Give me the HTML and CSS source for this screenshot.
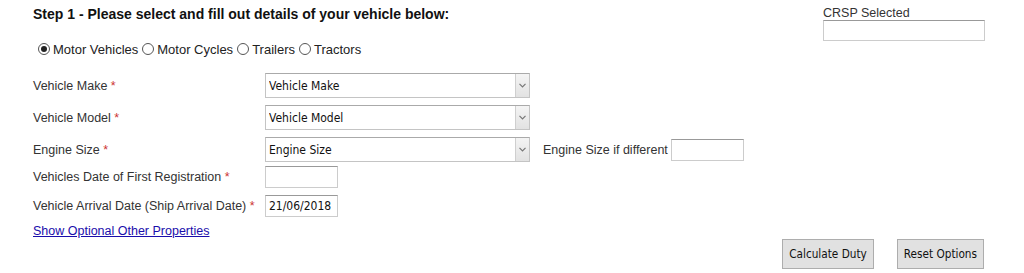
FILE: index.html
```html
<!DOCTYPE html>
<html lang="en">
<head>
  <meta charset="UTF-8">
  <title>Step 1 - Vehicle Details</title>
  <link rel="stylesheet" href="styles.css">
</head>
<body>
  <div class="page">
    <div class="top">
      <div class="intro">
        <h2>Step 1 - Please select and fill out details of your vehicle below:</h2>
        <div class="types">
          <label><input type="radio" name="type" checked>Motor Vehicles</label>
          <label><input type="radio" name="type">Motor Cycles</label>
          <label><input type="radio" name="type">Trailers</label>
          <label><input type="radio" name="type">Tractors</label>
        </div>
      </div>
      <div class="crsp">
        <span>CRSP Selected</span>
        <input type="text" class="crsp-box">
      </div>
    </div>

    <div class="row row-select">
      <label class="lbl">Vehicle Make <span class="req">*</span></label>
      <div class="sel">
        <select><option>Vehicle Make</option></select>
        <span class="arrow"><svg width="7" height="5" viewBox="0 0 7 5"><path d="M0.5 0.8 L3.5 3.8 L6.5 0.8" fill="none" stroke="#777" stroke-width="1.2"/></svg></span>
      </div>
    </div>
    <div class="row row-select">
      <label class="lbl">Vehicle Model <span class="req">*</span></label>
      <div class="sel">
        <select><option>Vehicle Model</option></select>
        <span class="arrow"><svg width="7" height="5" viewBox="0 0 7 5"><path d="M0.5 0.8 L3.5 3.8 L6.5 0.8" fill="none" stroke="#777" stroke-width="1.2"/></svg></span>
      </div>
    </div>
    <div class="row row-select row-engine">
      <label class="lbl">Engine Size <span class="req">*</span></label>
      <div class="sel">
        <select><option>Engine Size</option></select>
        <span class="arrow"><svg width="7" height="5" viewBox="0 0 7 5"><path d="M0.5 0.8 L3.5 3.8 L6.5 0.8" fill="none" stroke="#777" stroke-width="1.2"/></svg></span>
      </div>
      <span class="extra">Engine Size if different</span>
      <input type="text" class="txt">
    </div>
    <div class="row row-input">
      <label class="lbl">Vehicles Date of First Registration <span class="req">*</span></label>
      <input type="text" class="txt">
    </div>
    <div class="row row-input">
      <label class="lbl">Vehicle Arrival Date (Ship Arrival Date) <span class="req">*</span></label>
      <input type="text" class="txt" value="21/06/2018">
    </div>
    <a href="#" class="more">Show Optional Other Properties</a>

    <div class="buttons">
      <button type="button">Calculate Duty</button>
      <button type="button">Reset Options</button>
    </div>
  </div>
</body>
</html>
```

FILE: styles.css
```css
body {
  margin: 0;
  font-family: "Liberation Sans", Arial, sans-serif;
  font-size: 12.5px;
  color: #222;
  background-color: #fff;
}

.page {
  padding: 0 39px 0 33px;
}

.top {
  display: flex;
  justify-content: space-between;
}

h2 {
  font-size: 14px;
  line-height: 16px;
  margin: 6px 0 0;
  color: #111;
}

.types {
  display: flex;
  align-items: center;
  margin: 16px 0 0 5px;
  height: 22px;
  font-size: 13px;
}

.types label {
  display: flex;
  align-items: center;
  margin-right: 4px;
}

.types input {
  appearance: none;
  -webkit-appearance: none;
  box-sizing: border-box;
  width: 12px;
  height: 12px;
  margin: 0 3px 0 0;
  border: 1px solid #555;
  border-radius: 50%;
  background: #fff;
  display: flex;
  align-items: center;
  justify-content: center;
}

.types input:checked::after {
  content: "";
  width: 6px;
  height: 6px;
  border-radius: 50%;
  background: #222;
}

.crsp {
  display: flex;
  flex-direction: column;
  width: 162px;
  padding-top: 6px;
}

.crsp span {
  line-height: 14px;
  color: #333;
}

.crsp-box {
  width: 162px;
  height: 21px;
  margin: 0;
}

input[type="text"] {
  box-sizing: border-box;
  border: 1px solid #ccc;
  border-top-color: #999;
  padding: 1px 3px;
  font-family: "DejaVu Sans Condensed", Tahoma, sans-serif;
  font-size: 12px;
  color: #111;
  outline: none;
}

.row {
  display: flex;
  align-items: center;
}

.row-select {
  height: 25px;
  margin-top: 7px;
}

.top + .row-select {
  margin-top: 13px;
}

.lbl {
  width: 232px;
  flex: none;
  color: #333;
}

.req {
  color: #c33;
}

.sel {
  position: relative;
  width: 265px;
  height: 25px;
}

.sel select {
  appearance: none;
  -webkit-appearance: none;
  box-sizing: border-box;
  width: 100%;
  height: 100%;
  margin: 0;
  border: 1px solid #c4c4c4;
  border-top-color: #aaa;
  background: #fff;
  padding: 0 20px 0 3px;
  font-family: "DejaVu Sans Condensed", Tahoma, sans-serif;
  font-size: 12px;
  color: #111;
}

.arrow {
  position: absolute;
  top: 1px;
  right: 1px;
  bottom: 1px;
  width: 14px;
  box-sizing: border-box;
  border-left: 1px solid #cfcfcf;
  background: linear-gradient(#f4f4f4, #e2e2e2);
  display: flex;
  align-items: center;
  justify-content: center;
}

.extra {
  margin-left: 13px;
  margin-right: 3px;
  color: #333;
}

.row .txt {
  width: 73px;
  height: 22px;
}

.row-input {
  height: 22px;
  margin-top: 4px;
}

.row-input + .row-input {
  margin-top: 7px;
}

.more {
  display: inline-block;
  margin-top: 7px;
  line-height: 14px;
  color: #1a0dab;
}

.buttons {
  display: flex;
  justify-content: flex-end;
  gap: 23px;
  margin-top: 1px;
  padding-right: 1px;
}

.buttons button {
  height: 30px;
  padding: 0 6px;
  border: 1px solid #adadad;
  background-color: #e1e1e1;
  font-family: "DejaVu Sans Condensed", Tahoma, sans-serif;
  font-size: 11.7px;
  color: #111;
}
```
